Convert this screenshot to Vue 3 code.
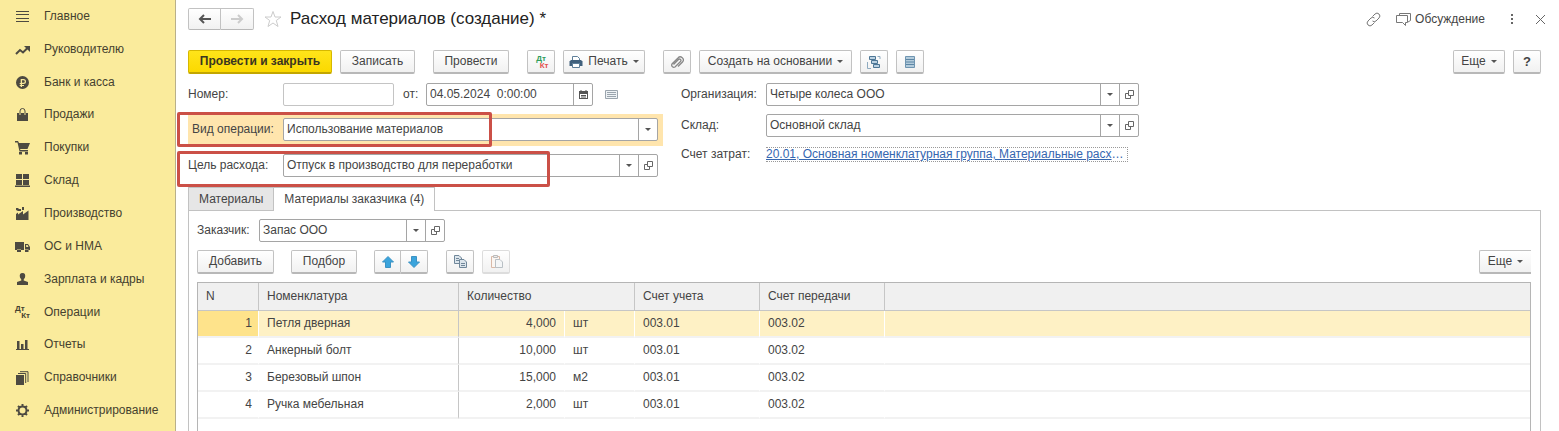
<script setup>
import { ref } from "vue"

const menu = [
  { title: "Главное", line: "M1 2.5H14M1 5.5H14M1 9.5H14M1 12.5H14" },
  { title: "Руководителю", line: "M1 12L5 8L8 10.5L12.5 6", fill: "M9 4H15V10L13 8L11 6Z", thick: true },
  { title: "Банк и касса", fill: "M7.5 1A6.5 6.5 0 1 0 7.5 14A6.5 6.5 0 1 0 7.5 1ZM6 4H8.5A2.4 2.4 0 0 1 8.5 9H7V10H9V11H7V12H5.7V11H4.7V10H5.7V9H4.7V8H5.7V4ZM7 5.2V7.8H8.5A1.3 1.3 0 0 0 8.5 5.2Z" },
  { title: "Продажи", fill: "M2 6H4V8H6V6H9V8H11V6H13V14H2Z", line: "M5 8V4A2.5 2.5 0 0 1 10 4V8" },
  { title: "Покупки", fill: "M0 1H3L4 3H15L12.5 9H5L5.5 10H13V11.5H4.5L2.5 2.5H0ZM4 12H7V14.5H4ZM10 12H13V14.5H10Z" },
  { title: "Склад", fill: "M1 1H7V6H1ZM8 1H14V6H8ZM1 7H7V12H1ZM8 7H14V12H8ZM0 12.5H15V14H0Z" },
  { title: "Производство", fill: "M1 14V8L3 6.5V8.5L8 5V8.5L13.5 4.5V14ZM1 2H3L4 3H6V5H3L1 4ZM7 1H9V4H7Z" },
  { title: "ОС и НМА", fill: "M0 3H9V11H0ZM10 5H13L15 8V11H10ZM11.2 6V8H13.5L12.5 6ZM2 10.5H6V13H2ZM10 10.5H13.5V13H10Z" },
  { title: "Зарплата и кадры", fill: "M7.5 1C10 1 10.7 3 10 5.5L8.7 7.5V8.5L13 10V13H2V10L6.3 8.5V7.5L5 5.5C4.3 3 5 1 7.5 1Z" },
  { title: "Операции", dtkt: true },
  { title: "Отчеты", fill: "M2 4H4.5V12H2ZM6 7H8.5V12H6ZM10 3H12.5V12H10ZM1 12H14V13H1Z" },
  { title: "Справочники", fill: "M1 5H9V15H1Z", line: "M3 3.5H10.7V13M5 1.7H13V12" },
  { title: "Администрирование", line: "M7.5 3.5A4 4 0 1 0 7.5 11.5A4 4 0 1 0 7.5 3.5M7.5 1V4M7.5 11V14M1 7.5H4M11 7.5H14M3 3L5 5M10 10L12 12M12 3L10 5M5 10L3 12", thick: true },
]

const number = ref("")
const date = ref("04.05.2024  0:00:00")
const operation = ref("Использование материалов")
const purpose = ref("Отпуск в производство для переработки")
const organization = ref("Четыре колеса ООО")
const warehouse = ref("Основной склад")
const customer = ref("Запас ООО")

const activeTab = ref(2)
const selected = ref(1)

const rows = [
  { n: 1, name: "Петля дверная", qty: "4,000", unit: "шт", account: "003.01", transfer: "003.02" },
  { n: 2, name: "Анкерный болт", qty: "10,000", unit: "шт", account: "003.01", transfer: "003.02" },
  { n: 3, name: "Березовый шпон", qty: "15,000", unit: "м2", account: "003.01", transfer: "003.02" },
  { n: 4, name: "Ручка мебельная", qty: "2,000", unit: "шт", account: "003.01", transfer: "003.02" },
]
</script>

<template>
  <div class="app">
    <nav class="sidebar">
      <a v-for="item in menu" :key="item.title" href="#" class="menuItem">
        <span v-if="item.dtkt" class="dtkt"><b>Дт</b><b>Кт</b></span>
        <svg v-else width="15" height="15" viewBox="0 0 15 15">
          <path v-if="item.fill" :d="item.fill" fill="#4d4a41" fill-rule="evenodd" />
          <path v-if="item.line" :d="item.line" fill="none" stroke="#4d4a41" :stroke-width="item.thick ? 2 : 1" />
        </svg>
        <span>{{ item.title }}</span>
      </a>
    </nav>

    <main class="main">
      <header class="titleBar">
        <div class="pair history">
          <button class="btn" aria-label="Назад">
            <svg width="14" height="10" viewBox="0 0 14 10"><path d="M13 5H2M6 1L2 5L6 9" fill="none" stroke="#555" stroke-width="2" /></svg>
          </button>
          <button class="btn" aria-label="Вперед">
            <svg width="14" height="10" viewBox="0 0 14 10"><path d="M1 5H12M8 1L12 5L8 9" fill="none" stroke="#ccc" stroke-width="2" /></svg>
          </button>
        </div>
        <button class="plain star" aria-label="В избранное">
          <svg width="18" height="18" viewBox="0 0 18 18"><path d="M9 1.5L11 7H17L12.3 10.5L14 16.5L9 13L4 16.5L5.700 10.5L1 7H7Z" fill="none" stroke="#ccc" /></svg>
        </button>
        <h1>Расход материалов (создание) *</h1>
        <button class="plain link" aria-label="Ссылка">
          <svg width="15" height="15" viewBox="0 0 15 15"><g fill="none" stroke="#777"><path d="M6.5 4.5L9 2A2.7 2.7 0 0 1 13 6L10 9A2.7 2.7 0 0 1 6.5 9" /><path d="M8.5 10.5L6 13A2.7 2.7 0 0 1 2 9L5 6A2.7 2.7 0 0 1 8.5 6" /></g></svg>
        </button>
        <button class="plain talk">
          <svg width="15" height="15" viewBox="0 0 15 15"><g fill="none" stroke="#777"><path d="M3.5 3.5V1.5H14.5V8.5L12 10" /><path d="M.5 3.5H11.5V10.5H9.5V13.5L6.5 10.5H.5Z" /></g></svg>
          Обсуждение
        </button>
        <button class="plain dots" aria-label="Меню">
          <svg width="4" height="12" viewBox="0 0 4 12"><path d="M1 1H3V3H1ZM1 5H3V7H1ZM1 9H3V11H1Z" fill="#666" /></svg>
        </button>
        <button class="plain" aria-label="Закрыть">
          <svg width="11" height="11" viewBox="0 0 11 11"><path d="M1 1L10 10M10 1L1 10" stroke="#666" /></svg>
        </button>
      </header>

      <div class="toolbar">
        <button class="btn primary">Провести и закрыть</button>
        <button class="btn save">Записать</button>
        <button class="btn post">Провести</button>
        <button class="btn icon" aria-label="Дт Кт"><span class="dtkt color"><b>Дт</b><b>Кт</b></span></button>
        <button class="btn print">
          <svg width="14" height="14" viewBox="0 0 14 14"><path d="M3.5 5.5V1.5H8.5L10.5 3.5V5.5" fill="#fff" stroke="#5f7f99" /><path d="M2 5H12L13.5 6.5V11H.5V6.5Z" fill="#41617d" /><path d="M3.5 8.5H10.5V12.5H3.5Z" fill="#fff" stroke="#5f7f99" /></svg>
          Печать <i class="caret"></i>
        </button>
        <button class="btn icon clip" aria-label="Файлы">
          <svg width="14" height="14" viewBox="0 0 14 14"><path d="M3.5 9.5L8.5 4.5A1.4 1.4 0 0 1 10.5 6.5L5 12A2.2 2.2 0 0 1 2 9L8 3A3 3 0 0 1 12.5 7L8 11.5" fill="none" stroke="#888" stroke-width="1.300" /></svg>
        </button>
        <button class="btn create">Создать на основании <i class="caret"></i></button>
        <button class="btn icon" aria-label="Структура подчиненности">
          <svg width="14" height="14" viewBox="0 0 14 14"><g fill="#bcd2e2" stroke="#4d7695"><path d="M2.5 1.5H8.5V4.5H2.5ZM4.5 5.5H10.5V8.5H4.5ZM6.5 9.5H12.5V12.5H6.500Z" /><path d="M10.5 1.5H13V4M.5 7V13.500H4" fill="none" stroke="#8fabc0" /></g></svg>
        </button>
        <button class="btn icon" aria-label="Список">
          <svg width="12" height="14" viewBox="0 0 12 14"><path d="M1.5 1.5H10.5V12.5H1.5Z" fill="#b3cbdb" stroke="#6f95b1" /><path d="M2 4.5H10M2 7H10M2 9.5H10" stroke="#5c86a5" /></svg>
        </button>
        <button class="btn more">Еще <i class="caret"></i></button>
        <button class="btn icon help">?</button>
      </div>

      <section class="form">
        <div class="column left">
          <div class="row">
            <label for="number">Номер:</label>
            <div class="field short"><input id="number" v-model="number"></div>
            <label for="date" class="from">от:</label>
            <div class="field date">
              <input id="date" v-model="date">
              <button aria-label="Календарь">
                <svg width="9" height="9" viewBox="0 0 9 9"><path d="M0 1H9V9H0ZM1 4V8H8V4Z" fill="#555" fill-rule="evenodd" /><path d="M2 0V2M7 0V2M2 5.5H7M2 7H7" stroke="#555" /></svg>
              </button>
            </div>
            <svg class="listIcon" width="13" height="11" viewBox="0 0 13 11"><path d="M.5 1.5H12.5V9.5H.5Z" fill="#eef2f5" stroke="#9aa4ad" /><path d="M2 3.5H11M2 5.5H11M2 7.5H11" stroke="#9aa4ad" /></svg>
          </div>
          <div class="row operation">
            <label for="operation">Вид операции:</label>
            <div class="field">
              <input id="operation" v-model="operation">
              <button aria-label="Выбрать"><i class="caret"></i></button>
            </div>
            <div class="mark"></div>
          </div>
          <div class="row purpose">
            <label for="purpose">Цель расхода:</label>
            <div class="field">
              <input id="purpose" v-model="purpose">
              <button aria-label="Выбрать"><i class="caret"></i></button>
              <button aria-label="Открыть"><svg width="9" height="9" viewBox="0 0 9 9"><path d="M3.5.5H8.5V5.5H3.5ZM3 3.5H.5V8.5H5.5V6" fill="none" stroke="#666" /></svg></button>
            </div>
            <div class="mark"></div>
          </div>
        </div>

        <div class="column right">
          <div class="row">
            <label for="organization">Организация:</label>
            <div class="field">
              <input id="organization" v-model="organization">
              <button aria-label="Выбрать"><i class="caret"></i></button>
              <button aria-label="Открыть"><svg width="9" height="9" viewBox="0 0 9 9"><path d="M3.5.5H8.5V5.5H3.5ZM3 3.5H.5V8.5H5.5V6" fill="none" stroke="#666" /></svg></button>
            </div>
          </div>
          <div class="row">
            <label for="warehouse">Склад:</label>
            <div class="field">
              <input id="warehouse" v-model="warehouse">
              <button aria-label="Выбрать"><i class="caret"></i></button>
              <button aria-label="Открыть"><svg width="9" height="9" viewBox="0 0 9 9"><path d="M3.5.5H8.5V5.5H3.5ZM3 3.5H.5V8.5H5.5V6" fill="none" stroke="#666" /></svg></button>
            </div>
          </div>
          <div class="row cost">
            <span class="caption">Счет затрат:</span>
            <span class="costLink"><a href="#">20.01, Основная номенклатурная группа, Материальные расх</a>…</span>
          </div>
        </div>
      </section>

      <div class="tabs">
        <button :class="{ active: activeTab === 1 }" @click="activeTab = 1">Материалы</button>
        <button :class="{ active: activeTab === 2 }" @click="activeTab = 2">Материалы заказчика (4)</button>
      </div>

      <section class="panel">
        <div class="row customer">
          <label for="customer">Заказчик:</label>
          <div class="field">
            <input id="customer" v-model="customer">
            <button aria-label="Выбрать"><i class="caret"></i></button>
            <button aria-label="Открыть"><svg width="9" height="9" viewBox="0 0 9 9"><path d="M3.5.5H8.5V5.5H3.5ZM3 3.5H.5V8.5H5.5V6" fill="none" stroke="#666" /></svg></button>
          </div>
        </div>

        <div class="toolbar listBar">
          <button class="btn add">Добавить</button>
          <button class="btn pick">Подбор</button>
          <div class="pair order">
            <button class="btn" aria-label="Вверх">
              <svg width="12" height="12" viewBox="0 0 12 12"><path d="M6 .5L11.5 6H8.5V11.5H3.5V6H.5Z" fill="#3ba4dc" stroke="#3b92c4" /></svg>
            </button>
            <button class="btn" aria-label="Вниз">
              <svg width="12" height="12" viewBox="0 0 12 12"><path d="M6 11.5L11.5 6H8.5V.5H3.5V6H.5Z" fill="#3ba4dc" stroke="#3b92c4" /></svg>
            </button>
          </div>
          <button class="btn icon" aria-label="Копировать">
            <svg width="15" height="15" viewBox="0 0 15 15"><g fill="#dce5ec" stroke="#70879a"><path d="M1.5 1.5H6L8.5 4V9.5H1.5Z" /><path d="M6.5 5.5H11L13.5 8V13.5H6.5Z" /><path d="M3 4.5H6M3 6.5H6M8 9.5H12M8 11.5H12" /></g></svg>
          </button>
          <button class="btn icon" aria-label="Вставить" disabled>
            <svg width="15" height="15" viewBox="0 0 15 15"><path d="M2.5 2.5H10.5V13.5H2.5Z" fill="#fbf6f2" stroke="#d9b9a7" /><path d="M4.5 1.5H8.5V3.5H4.5Z" fill="#eee" stroke="#bbb" /><path d="M6.5 5.5H11L13.5 8V13.5H6.5Z" fill="#f4f6f7" stroke="#b9c0c5" /></svg>
          </button>
          <button class="btn more cut">Еще <i class="caret"></i></button>
        </div>

        <div class="tableBox">
          <table>
            <colgroup>
              <col class="cN"><col class="cName"><col class="cQty"><col class="cUnit"><col class="cAcc"><col class="cAcc"><col>
            </colgroup>
            <thead>
              <tr>
                <th>N</th>
                <th>Номенклатура</th>
                <th colspan="2">Количество</th>
                <th>Счет учета</th>
                <th>Счет передачи</th>
                <th></th>
              </tr>
            </thead>
            <tbody>
              <tr v-for="row in rows" :key="row.n" :class="{ selected: selected === row.n }" @click="selected = row.n">
                <td class="num">{{ row.n }}</td>
                <td class="name">{{ row.name }}</td>
                <td class="qty">{{ row.qty }}</td>
                <td>{{ row.unit }}</td>
                <td>{{ row.account }}</td>
                <td>{{ row.transfer }}</td>
                <td></td>
              </tr>
            </tbody>
          </table>
        </div>
      </section>
    </main>
  </div>
</template>

<style>
body {
  margin: 0;
  background: #fff;
}
</style>

<style scoped>
* {
  box-sizing: border-box;
}

.app {
  display: flex;
  min-height: 100vh;
  font-family: "Liberation Sans", Arial, sans-serif;
  font-size: 12px;
  line-height: 15px;
  color: #444;
}

button,
input {
  font: inherit;
  color: inherit;
}

svg {
  display: block;
  flex: none;
}

/* Разделы */
.sidebar {
  flex: 0 0 176px;
  display: flex;
  flex-direction: column;
  padding-bottom: 4px;
  background: #faeb9c;
  border-right: 1px solid #b9b08a;
}

.menuItem {
  flex: 1;
  display: flex;
  align-items: center;
  gap: 14px;
  padding-left: 15px;
  color: #45412f;
  text-decoration: none;
}

.dtkt {
  display: flex;
  flex-direction: column;
  width: 15px;
  font-size: 8px;
  line-height: 7px;
}

.dtkt b:last-child {
  align-self: flex-end;
}

.dtkt.color b:first-child {
  color: #2f9e5b;
}

.dtkt.color b:last-child {
  color: #e2534f;
}

.main {
  flex: 1;
  min-width: 0;
  display: flex;
  flex-direction: column;
  padding: 8px 18px 0 12px;
}

/* Заголовок */
.titleBar {
  display: flex;
  align-items: center;
  height: 22px;
}

h1 {
  flex: 1;
  margin: 0;
  font-size: 17px;
  line-height: 22px;
  font-weight: normal;
  color: #222;
}

.plain {
  display: flex;
  align-items: center;
  gap: 4px;
  padding: 0;
  border: 0;
  background: none;
}

.star {
  margin: 0 8px 0 10px;
}

.link {
  margin-right: 15px;
}

.dots {
  margin: 0 21px 0 25px;
}

.titleBar .plain:last-child {
  margin-right: -5px;
}

/* Кнопки */
.btn {
  display: flex;
  align-items: center;
  justify-content: center;
  height: 24px;
  padding: 0;
  border: 1px solid #c2c2c2;
  border-bottom: 2px solid #b8b8b8;
  border-radius: 2px;
  background: linear-gradient(#fff, #f1f1f1);
  white-space: nowrap;
}

.pair {
  display: flex;
}

.pair .btn:first-child {
  border-radius: 2px 0 0 2px;
}

.pair .btn:last-child {
  border-left: 0;
  border-radius: 0 2px 2px 0;
}

.history .btn {
  width: 33px;
  height: 22px;
  border-bottom-width: 1px;
}

.caret {
  width: 0;
  height: 0;
  border: 3px solid transparent;
  border-top-color: #555;
  border-bottom: 0;
}

.btn .caret {
  margin-left: 5px;
}

.toolbar {
  display: flex;
  gap: 8px;
  margin-top: 20px;
}

.btn.primary {
  width: 144px;
  border-color: #d6b800;
  border-bottom-color: #c3a600;
  background: linear-gradient(#ffe41a, #fbd900);
  font-weight: bold;
  color: #3a3520;
}

.save {
  width: 75px;
}

.post {
  width: 76px;
  margin: 0 10px;
}

.icon {
  width: 28px;
}

.print {
  width: 82px;
}

.print svg {
  margin-right: 5px;
}

.clip {
  margin-left: 10px;
}

.create {
  width: 153px;
}

.more {
  width: 52px;
  margin-left: auto;
}

.help {
  font-size: 13px;
  font-weight: bold;
}

.btn:disabled {
  border-color: #ddd;
}

/* Реквизиты */
.form {
  display: flex;
  gap: 18px;
  margin-top: 9px;
}

.column {
  display: flex;
  flex-direction: column;
  gap: 8px;
}

.left {
  flex: 0 1 475px;
}

.right {
  flex: 0 1 458px;
}

.row {
  position: relative;
  display: flex;
  align-items: center;
}

.row label,
.caption {
  flex: none;
  width: 95px;
}

.right label,
.caption {
  width: 85px;
}

.field {
  flex: 1;
  display: flex;
  height: 23px;
  min-width: 0;
  border: 1px solid #a5a5a5;
  border-radius: 2px;
  background: #fff;
}

.field input {
  flex: 1;
  min-width: 0;
  padding: 0 3px;
  border: 0;
  background: none;
  outline: none;
  white-space: pre;
}

.field button {
  display: flex;
  align-items: center;
  justify-content: center;
  width: 19px;
  padding: 0;
  border: 0;
  border-left: 1px solid #a5a5a5;
  background: none;
}

.field.short {
  flex: 0 1 111px;
  border-color: #c4c4c4;
}

.row .from {
  width: 23px;
  margin-left: 9px;
}

.field.date {
  flex: 0 1 167px;
}

.listIcon {
  margin-left: 12px;
}

.operation {
  padding: 4px 5px 5px 4px;
  background: #ffe5ad;
}

.row.operation label {
  width: 91px;
}

.purpose {
  padding-right: 5px;
}

.mark {
  position: absolute;
  top: -2px;
  bottom: -1px;
  left: -11px;
  width: 315px;
  border: 3px solid #cb5047;
  border-radius: 2px;
  pointer-events: none;
}

.purpose .mark {
  top: -3px;
  bottom: -10px;
  width: 373px;
}

.cost {
  margin-top: 2px;
}

.costLink {
  flex: none;
  padding-right: 3px;
  border: 1px dotted #999;
  border-left: 0;
  line-height: 13px;
  white-space: nowrap;
  color: #3566b0;
}

.costLink a {
  color: #3566b0;
}

/* Вкладки */
.tabs {
  display: flex;
  margin-top: 10px;
}

.tabs button {
  height: 23px;
  padding: 0 10px;
  border: 1px solid #c2c2c2;
  border-bottom: 0;
  background: #e6e6e6;
}

.tabs button + button {
  border-left: 0;
}

.tabs .active {
  position: relative;
  height: 24px;
  margin-bottom: -1px;
  background: #fff;
}

.panel {
  flex: 1;
  display: flex;
  flex-direction: column;
  padding: 8px 9px 0 8px;
  border: 1px solid #c2c2c2;
  border-bottom: 0;
}

.row.customer label {
  width: 62px;
}

.customer .field {
  flex: 0 1 186px;
}

.listBar {
  margin-top: 8px;
}

.add {
  width: 77px;
}

.pick {
  width: 66px;
  margin: 0 9px;
}

.order {
  margin-right: 10px;
}

.order .btn {
  width: 27px;
}

.cut {
  border-right: 0;
  border-radius: 2px 0 0 2px;
}

/* Таблица */
.tableBox {
  flex: 1;
  margin-top: 8px;
  border: 1px solid #b5b5b5;
  border-bottom: 0;
}

table {
  width: 100%;
  table-layout: fixed;
  border-collapse: separate;
  border-spacing: 0;
}

.cN {
  width: 61px;
}

.cName {
  width: 200px;
}

.cQty {
  width: 106px;
}

.cUnit {
  width: 70px;
}

.cAcc {
  width: 125px;
}

th {
  height: 28px;
  padding: 0 8px;
  border-right: 1px solid #c6c6c6;
  border-bottom: 1px solid #c6c6c6;
  background: #f0f0f0;
  font-weight: normal;
  text-align: left;
}

td {
  height: 27px;
  padding: 0 8px;
  border-right: 1px solid #fff;
  border-bottom: 2px solid #f2f2f2;
}

th:last-child,
td:last-child {
  border-right: 0;
}

td.num {
  padding-right: 6px;
  text-align: right;
}

td.name {
  border-right-color: #c6c6c6;
}

td.qty {
  text-align: right;
}

.selected td {
  background: #fef1c5;
}

.selected td.num {
  background: #fee38b;
}
</style>
